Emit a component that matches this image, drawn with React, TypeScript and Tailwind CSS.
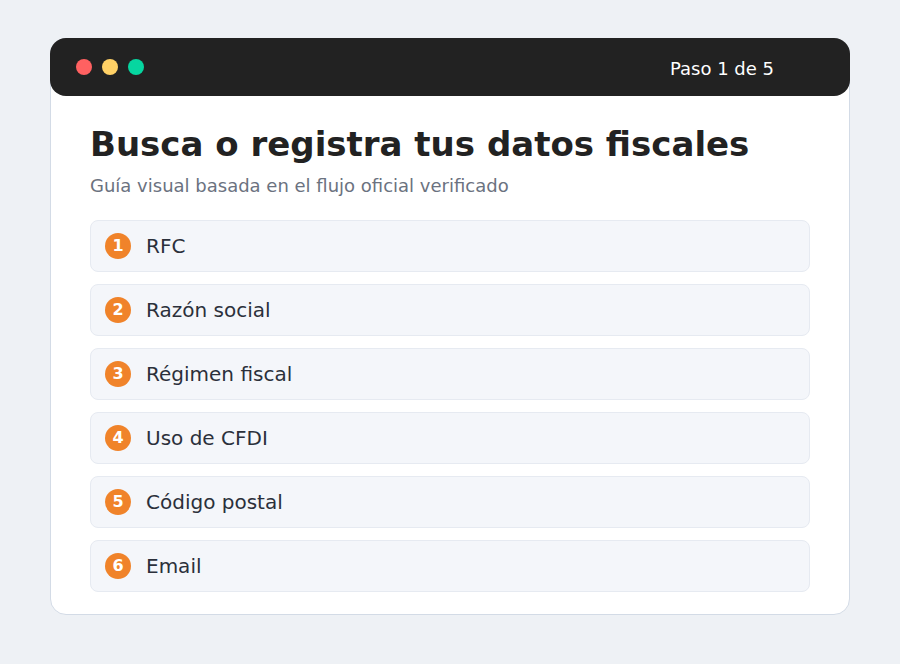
import React from 'react';

const fields = ['RFC', 'Razón social', 'Régimen fiscal', 'Uso de CFDI', 'Código postal', 'Email'];

export default function App() {
  return (
    <div
      className="min-h-[664px] w-full bg-[#eef1f5] px-[50px] pt-[38px]"
      style={{ fontFamily: '"DejaVu Sans", Verdana, sans-serif' }}
    >
      <div className="rounded-2xl border border-[#d3dbe6] bg-white">
        <div className="-mx-px -mt-px flex h-[58px] items-center rounded-2xl bg-[#222222] pl-[26px] pr-[76px]">
          <div className="flex gap-[10px]">
            <span className="h-4 w-4 rounded-full bg-[#ff6161]" />
            <span className="h-4 w-4 rounded-full bg-[#ffd166]" />
            <span className="h-4 w-4 rounded-full bg-[#06d6a0]" />
          </div>
          <span className="ml-auto pt-[3px] text-[18px] text-white">Paso 1 de 5</span>
        </div>
        <div className="px-[39px] pb-[22px] pt-[26px]">
          <h1 className="text-[34px] font-bold leading-[44px] text-[#222222]">
            Busca o registra tus datos fiscales
          </h1>
          <p className="mt-[8px] text-[18px] leading-6 text-[#6b7280]">
            Guía visual basada en el flujo oficial verificado
          </p>
          <div className="mt-[22px] flex flex-col gap-3">
            {fields.map((f, i) => (
              <div
                key={f}
                className="flex h-[52px] items-center gap-[15px] rounded-lg border border-[#e6eaf1] bg-[#f4f6fa] px-[14px]"
              >
                <span className="flex h-[26px] w-[26px] items-center justify-center rounded-full bg-[#f0832a] text-[16px] font-bold text-white">
                  {i + 1}
                </span>
                <span className="text-[20px] text-[#2b303b]">{f}</span>
              </div>
            ))}
          </div>
        </div>
      </div>
    </div>
  );
}
